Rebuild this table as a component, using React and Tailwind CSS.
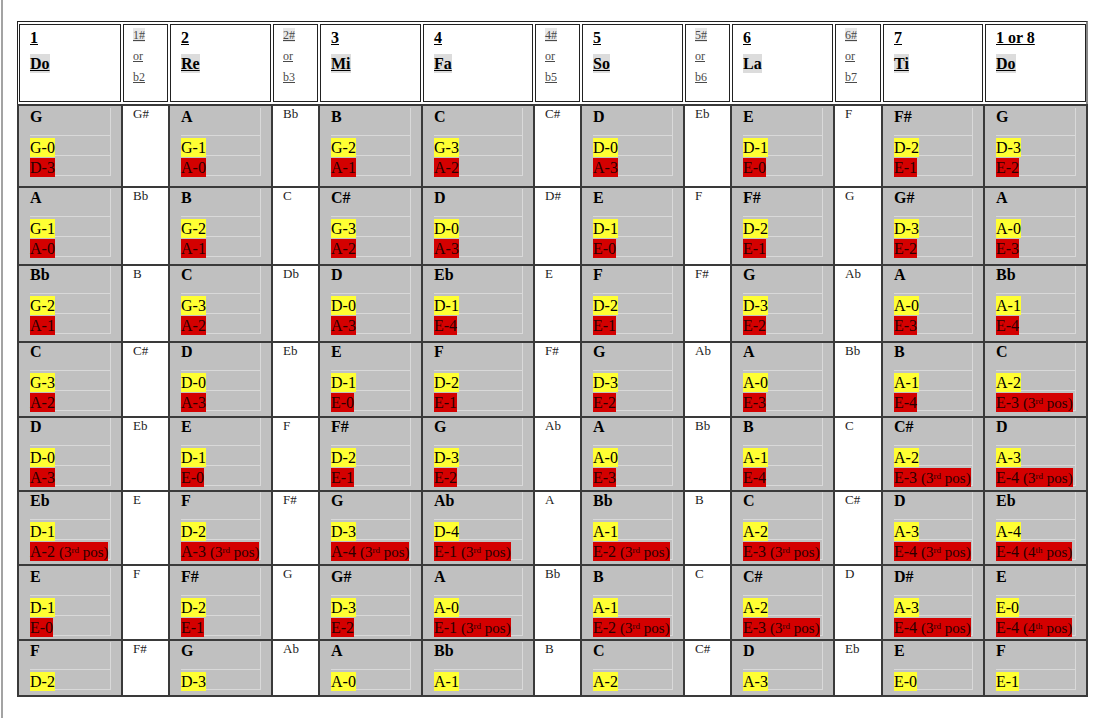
import React from "react";

// scale degrees across the top
const HEAD = [
  { main: true, n: "1", s: "Do" },
  { a: "1#", b: "b2" },
  { main: true, n: "2", s: "Re" },
  { a: "2#", b: "b3" },
  { main: true, n: "3", s: "Mi" },
  { main: true, n: "4", s: "Fa" },
  { a: "4#", b: "b5" },
  { main: true, n: "5", s: "So" },
  { a: "5#", b: "b6" },
  { main: true, n: "6", s: "La", plain: true },
  { a: "6#", b: "b7" },
  { main: true, n: "7", s: "Ti" },
  { main: true, n: "1 or 8", s: "Do" },
];

// "note|yellow|red"  red may carry ":pos:suffix" -> "E-3 (3rd pos)"
const ROWS = [
  ["G|G-0|D-3", "G#", "A|G-1|A-0", "Bb", "B|G-2|A-1", "C|G-3|A-2", "C#", "D|D-0|A-3", "Eb", "E|D-1|E-0", "F", "F#|D-2|E-1", "G|D-3|E-2"],
  ["A|G-1|A-0", "Bb", "B|G-2|A-1", "C", "C#|G-3|A-2", "D|D-0|A-3", "D#", "E|D-1|E-0", "F", "F#|D-2|E-1", "G", "G#|D-3|E-2", "A|A-0|E-3"],
  ["Bb|G-2|A-1", "B", "C|G-3|A-2", "Db", "D|D-0|A-3", "Eb|D-1|E-4", "E", "F|D-2|E-1", "F#", "G|D-3|E-2", "Ab", "A|A-0|E-3", "Bb|A-1|E-4"],
  ["C|G-3|A-2", "C#", "D|D-0|A-3", "Eb", "E|D-1|E-0", "F|D-2|E-1", "F#", "G|D-3|E-2", "Ab", "A|A-0|E-3", "Bb", "B|A-1|E-4", "C|A-2|E-3:3:rd"],
  ["D|D-0|A-3", "Eb", "E|D-1|E-0", "F", "F#|D-2|E-1", "G|D-3|E-2", "Ab", "A|A-0|E-3", "Bb", "B|A-1|E-4", "C", "C#|A-2|E-3:3:rd", "D|A-3|E-4:3:rd"],
  ["Eb|D-1|A-2:3:rd", "E", "F|D-2|A-3:3:rd", "F#", "G|D-3|A-4:3:rd", "Ab|D-4|E-1:3:rd", "A", "Bb|A-1|E-2:3:rd", "B", "C|A-2|E-3:3:rd", "C#", "D|A-3|E-4:3:rd", "Eb|A-4|E-4:4:th"],
  ["E|D-1|E-0", "F", "F#|D-2|E-1", "G", "G#|D-3|E-2", "A|A-0|E-1:3:rd", "Bb", "B|A-1|E-2:3:rd", "C", "C#|A-2|E-3:3:rd", "D", "D#|A-3|E-4:3:rd", "E|E-0|E-4:4:th"],
  ["F|D-2", "F#", "G|D-3", "Ab", "A|A-0", "Bb|A-1", "B", "C|A-2", "C#", "D|A-3", "Eb", "E|E-0", "F|E-1"],
];

// gray cells don't all start at the same height
const ROW_PT = ["pt-[2px]", "pt-[1px]", "pt-[0px]", "pt-[0px]", "pt-[0px]", "pt-[0px]", "pt-[2px]", "pt-[1px]"];

const serif = { fontFamily: '"Liberation Serif", "Times New Roman", serif' };

function HeadCell({ h }) {
  if (h.main) {
    return (
      <div className="h-[78px] border border-[#222] bg-white pl-[10px] pt-[3px] text-black">
        <div className="text-[16px] font-bold leading-[19px] underline">{h.n}</div>
        <div className="mt-[7px] leading-[19px]">
          <span className={`inline-block bg-[#dcdcdc] text-[16px] font-bold ${h.plain ? "" : "underline"}`}>{h.s}</span>
        </div>
      </div>
    );
  }
  return (
    <div className="h-[78px] border border-[#222] bg-white pl-[9px] text-[12px] leading-[21px] text-[#4a4a4a]">
      <div>
        <span className="bg-[#e8e8e8] underline">{h.a}</span>
      </div>
      <div className="underline">or</div>
      <div className="underline">{h.b}</div>
    </div>
  );
}

function RedText({ text }) {
  const [main, pos, suf] = text.split(":");
  if (!pos) return main;
  return (
    <>
      {main}{" "}
      <span className="text-[15px]">
        ({pos}
        <sup className="text-[9px]">{suf}</sup> pos)
      </span>
    </>
  );
}

function NoteCell({ spec, pt }) {
  const [note, yellow, red] = spec.split("|");
  return (
    <div className={`bg-[#c0c0c0] pl-[11px] pr-[10px] ${pt}`}>
      <div className="border-r border-[#d9d9d9]">
        <div className="text-[16px] font-bold leading-[18px] text-black">{note}</div>
        <div className="mt-[9px] border-t border-[#d9d9d9]">
          <div className="h-[20px] border-b border-[#d9d9d9]">
            <span className="inline-block h-[19px] whitespace-nowrap bg-[#ffff33] text-[16px] leading-[19px] text-black">{yellow}</span>
          </div>
          {red && (
            <div className="h-[20px] border-b border-[#d9d9d9]">
              <span className="inline-block h-[19px] whitespace-nowrap bg-[#d40000] text-[16px] leading-[19px] text-[#2a0000]">
                <RedText text={red} />
              </span>
            </div>
          )}
        </div>
      </div>
    </div>
  );
}

function SharpCell({ text }) {
  return <div className="bg-white pl-[10px] text-[13px] leading-[15px] text-[#222]">{text}</div>;
}

export default function App() {
  return (
    <div className="h-[718px] w-[1105px] overflow-hidden bg-white pl-px" style={serif}>
      <div className="h-full border-l-2 border-[#a3a3a3] pl-[14px] pt-[21px]">
        <div className="w-[1071px]">
          {/* header: double-ruled cells */}
          <div className="grid grid-cols-[102px_45px_101px_45px_101px_110px_45px_101px_45px_101px_46px_100px_101px] gap-x-[2px] border-l border-t border-r-2 border-l-[#222] border-t-[#222] border-r-[#888] pb-[2px] pl-px pt-[2px]">
            {HEAD.map((h, i) => (
              <HeadCell key={i} h={h} />
            ))}
          </div>

          {/* body */}
          <div className="grid grid-cols-[102px_45px_101px_45px_101px_110px_45px_101px_45px_101px_46px_100px_101px] grid-rows-[80px_76px_75px_73px_72px_72px_73px_54px] gap-[2px] border-2 border-[#3a3a3a] bg-[#3a3a3a]">
            {ROWS.map((row, r) =>
              row.map((c, i) =>
                c.includes("|") ? <NoteCell key={r + "-" + i} spec={c} pt={ROW_PT[r]} /> : <SharpCell key={r + "-" + i} text={c} />
              )
            )}
          </div>
        </div>
      </div>
    </div>
  );
}
